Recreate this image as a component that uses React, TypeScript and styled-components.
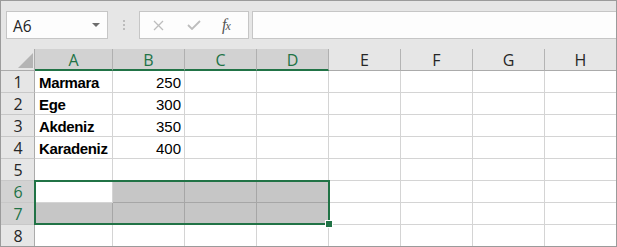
import React from 'react';
import styled, { createGlobalStyle } from 'styled-components';

const GREEN = '#217346';

const GlobalStyle = createGlobalStyle`
  body {
    margin: 0;
    background: #ffffff;
    font-family: "Open Sans", "Liberation Sans", sans-serif;
  }
`;

const Frame = styled.div`
  width: 617px;
  height: 247px;
  box-sizing: border-box;
  border: 1px solid #9b9b9b;
  background: #e6e6e6;
  overflow: hidden;
`;

const Toolbar = styled.div`
  height: 48px;
  box-sizing: border-box;
  padding: 10px 0 0 5px;
  display: flex;
  align-items: flex-start;
`;

const NameBox = styled.div`
  width: 102px;
  height: 28px;
  box-sizing: border-box;
  border: 1px solid #c6c6c6;
  background: #fdfdfd;
  display: flex;
  align-items: center;
  padding: 0 6px 0 6px;
  font-size: 15.5px;
  color: #262626;
`;

const NameText = styled.span`
  flex: 1;
  margin-top: 1px;
`;

const Caret = styled.span`
  width: 0;
  height: 0;
  border-left: 4px solid transparent;
  border-right: 4px solid transparent;
  border-top: 4px solid #6d6d6d;
  margin-right: 1px;
`;

const Grip = styled.div`
  width: 31px;
  height: 28px;
  display: flex;
  flex-direction: column;
  align-items: center;
  justify-content: center;
  gap: 2px;
`;

const Dot = styled.span`
  width: 2px;
  height: 2px;
  background: #bcbcbc;
`;

const FuncBox = styled.div`
  width: 110px;
  height: 28px;
  box-sizing: border-box;
  border: 1px solid #c6c6c6;
  background: #fdfdfd;
  display: flex;
  align-items: center;
  padding-left: 13px;
  gap: 23px;
`;

const Fx = styled.span`
  font-family: "Liberation Serif", serif;
  font-style: italic;
  font-size: 16px;
  color: #555555;
  margin-left: -2px;
  letter-spacing: -1px;
  & small {
    font-size: 12px;
  }
`;

const FormulaBox = styled.div`
  flex: 1;
  height: 28px;
  margin-left: 3px;
  margin-right: -2px;
  box-sizing: border-box;
  border: 1px solid #c6c6c6;
  background: #fdfdfd;
`;

const Grid = styled.div`
  position: relative;
`;

const Row = styled.div`
  display: flex;
  height: 22px;
`;

const Corner = styled.div`
  width: 34px;
  height: 22px;
  box-sizing: border-box;
  border-right: 1px solid #ababab;
  border-bottom: 1px solid #ababab;
  position: relative;
  flex-shrink: 0;
`;

const Triangle = styled.span`
  position: absolute;
  right: 1px;
  bottom: 2px;
  width: 0;
  height: 0;
  border-left: 15px solid transparent;
  border-bottom: 15px solid #b4b4b4;
`;

const ColHead = styled.div<{ $w: number; $sel?: boolean }>`
  width: ${p => p.$w}px;
  height: 22px;
  flex-shrink: 0;
  box-sizing: border-box;
  border-right: 1px solid ${p => (p.$sel ? '#b0b0b0' : '#b4b4b4')};
  border-bottom: ${p => (p.$sel ? `2px solid ${GREEN}` : '1px solid #ababab')};
  background: ${p => (p.$sel ? '#d2d2d2' : '#e6e6e6')};
  color: ${p => (p.$sel ? GREEN : '#262626')};
  font-size: 16px;
  display: flex;
  align-items: center;
  justify-content: center;
  padding-top: ${p => (p.$sel ? 1 : 0)}px;
`;

const RowHead = styled.div<{ $sel?: boolean }>`
  width: 34px;
  height: 22px;
  flex-shrink: 0;
  box-sizing: border-box;
  border-right: 1px solid #ababab;
  border-bottom: 1px solid #c8c8c8;
  background: ${p => (p.$sel ? '#d2d2d2' : '#e6e6e6')};
  color: ${p => (p.$sel ? GREEN : '#262626')};
  font-size: 16px;
  display: flex;
  align-items: center;
  justify-content: center;
  padding-left: 1px;
`;

const Cell = styled.div<{ $w: number; $fill?: boolean; $bold?: boolean; $num?: boolean }>`
  width: ${p => p.$w}px;
  height: 22px;
  flex-shrink: 0;
  box-sizing: border-box;
  border-right: 1px solid ${p => (p.$fill ? '#a6a6a6' : '#d4d4d4')};
  border-bottom: 1px solid ${p => (p.$fill ? '#a6a6a6' : '#d4d4d4')};
  background: ${p => (p.$fill ? '#c6c6c6' : '#ffffff')};
  font-family: "Liberation Sans", Arial, sans-serif;
  font-size: 15px;
  font-weight: ${p => (p.$bold ? 700 : 400)};
  letter-spacing: ${p => (p.$bold ? '-0.35px' : '0')};
  color: #000000;
  line-height: 22px;
  padding: 1px 3px 0 4px;
  text-align: ${p => (p.$num ? 'right' : 'left')};
  white-space: nowrap;
  overflow: hidden;
`;

const Selection = styled.div`
  position: absolute;
  left: 33px;
  top: 131px;
  width: 296px;
  height: 45px;
  box-sizing: border-box;
  border: 2px solid ${GREEN};
  pointer-events: none;
`;

const Handle = styled.span`
  position: absolute;
  left: 324px;
  top: 171px;
  width: 6px;
  height: 6px;
  background: ${GREEN};
  border: 1px solid #ffffff;
`;

const widths = [78, 72, 72, 72, 72, 72, 72, 72];
const letters = ['A', 'B', 'C', 'D', 'E', 'F', 'G', 'H'];

const data: Record<number, [string, string]> = {
  1: ['Marmara', '250'],
  2: ['Ege', '300'],
  3: ['Akdeniz', '350'],
  4: ['Karadeniz', '400'],
};

const XIcon = () => (
  <svg width="11" height="11" viewBox="0 0 11 11">
    <path d="M1 1 L10 10 M10 1 L1 10" stroke="#bdbdbd" strokeWidth="1.3" fill="none" />
  </svg>
);

const CheckIcon = () => (
  <svg width="14" height="10" viewBox="0 0 14 10">
    <path d="M1 5 L5 9 L13 1" stroke="#bdbdbd" strokeWidth="1.8" fill="none" />
  </svg>
);

const isFilled = (row: number, col: number) =>
  (row === 6 && col >= 1 && col <= 3) || (row === 7 && col <= 3);

export default function App() {
  return (
    <>
      <GlobalStyle />
      <Frame>
        <Toolbar>
          <NameBox>
            <NameText>A6</NameText>
            <Caret />
          </NameBox>
          <Grip>
            <Dot />
            <Dot />
            <Dot />
          </Grip>
          <FuncBox>
            <XIcon />
            <CheckIcon />
            <Fx>
              f<small>x</small>
            </Fx>
          </FuncBox>
          <FormulaBox />
        </Toolbar>

        <Grid>
          <Row>
            <Corner>
              <Triangle />
            </Corner>
            {letters.map((l, i) => (
              <ColHead key={l} $w={widths[i]} $sel={i < 4}>
                {l}
              </ColHead>
            ))}
          </Row>
          {[1, 2, 3, 4, 5, 6, 7, 8].map(r => (
            <Row key={r}>
              <RowHead $sel={r === 6 || r === 7}>{r}</RowHead>
              {widths.map((w, c) => (
                <Cell
                  key={c}
                  $w={w}
                  $fill={isFilled(r, c)}
                  $bold={c === 0}
                  $num={c === 1}
                >
                  {data[r] && c < 2 ? data[r][c] : ''}
                </Cell>
              ))}
            </Row>
          ))}
          <Selection />
          <Handle />
        </Grid>
      </Frame>
    </>
  );
}
